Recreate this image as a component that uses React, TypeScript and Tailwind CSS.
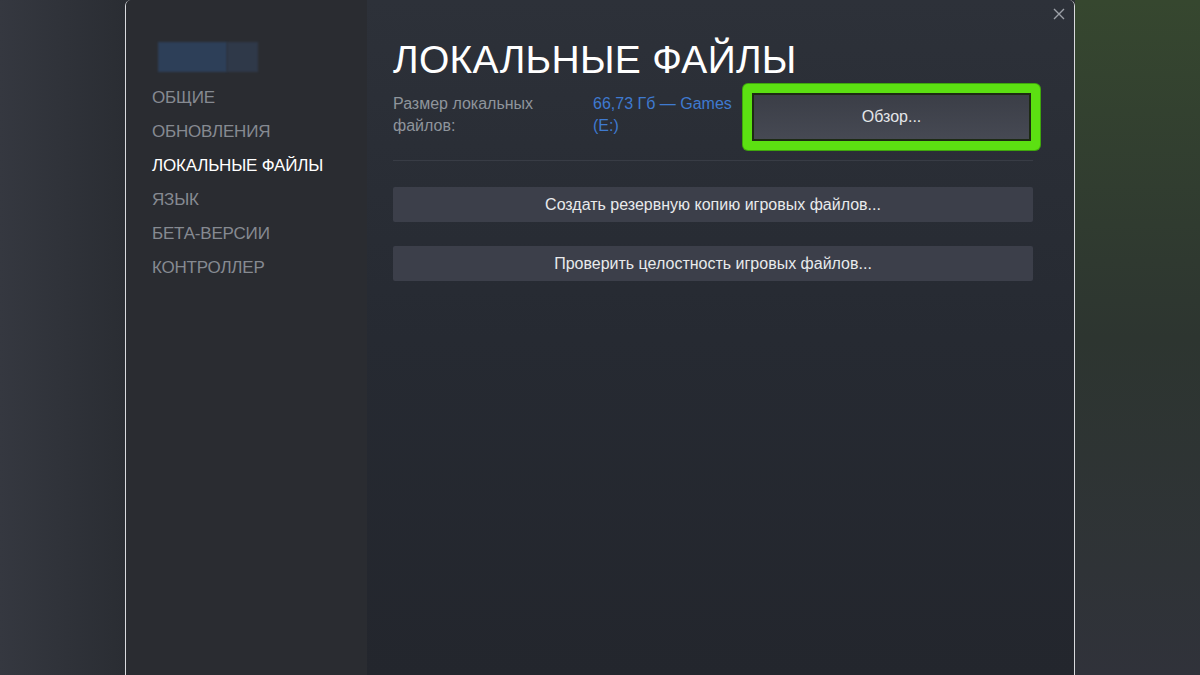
import React from "react";

const navItems = [
  "ОБЩИЕ",
  "ОБНОВЛЕНИЯ",
  "ЛОКАЛЬНЫЕ ФАЙЛЫ",
  "ЯЗЫК",
  "БЕТА-ВЕРСИИ",
  "КОНТРОЛЛЕР",
];

function CloseIcon() {
  return (
    <svg width="12" height="12" viewBox="0 0 12 12" fill="none">
      <path d="M1 1L11 11M11 1L1 11" stroke="#9ca0a7" strokeWidth="1.4" />
    </svg>
  );
}

export default function App() {
  return (
    <div
      className="flex h-[675px] w-[1200px] overflow-hidden bg-[#2c2f35]"
      style={{ fontFamily: '"Liberation Sans", Arial, sans-serif' }}
    >
      {/* left backdrop */}
      <div className="h-full w-[125px] bg-gradient-to-r from-[#353840] to-[#2a2d33]" />

      {/* dialog */}
      <div className="flex h-full w-[950px] overflow-hidden rounded-t-md border-x border-[#d9dade]">
        <aside className="flex w-[241px] flex-col bg-[#2a2c31] pl-[26px] pt-[42px]">
          <div className="ml-[6px] flex h-[30px] w-[100px]">
            <div className="h-full w-[69px] bg-[#2d3f58] blur-[1px]" />
            <div className="h-full w-[31px] bg-[#2f3949] blur-[1px]" />
          </div>
          <nav className="mt-[9px] flex flex-col text-[17px] tracking-[-0.2px]">
            {navItems.map((item) => (
              <div
                key={item}
                className={`flex h-[34px] items-center ${
                  item === "ЛОКАЛЬНЫЕ ФАЙЛЫ" ? "text-white" : "text-[#868a91]"
                }`}
              >
                {item}
              </div>
            ))}
          </nav>
        </aside>

        <main className="relative flex flex-1 flex-col bg-gradient-to-b from-[#2d3139] via-[#262a32] to-[#23262d] pl-[26px] pr-[41px] pt-[40px]">
          <button className="absolute right-[5px] top-[4px] p-1">
            <CloseIcon />
          </button>

          <h1 className="text-[39px] leading-[40px] tracking-[0.3px] text-white">
            ЛОКАЛЬНЫЕ ФАЙЛЫ
          </h1>

          <div className="mt-[3px] flex items-start">
            <div className="mt-[10px] w-[200px] text-[16px] leading-[22px] text-[#8f959c]">
              Размер локальных
              <br />
              файлов:
            </div>
            <div className="mt-[10px] w-[150px] text-[16px] leading-[22px] text-[#3f7ad0]">
              66,73 Гб — Games
              <br />
              (E:)
            </div>
            <div className="mr-[-10px] mt-[1px] rounded-[5px] bg-[#5ce012] p-[9px] shadow-[0_0_0_1px_#3fa70c]">
              <button className="flex h-[48px] w-[279px] items-center justify-center border-2 border-[#1d2a14] bg-gradient-to-b from-[#3b3e47] to-[#464953] text-[16px] text-[#e4e6e9]">
                Обзор...
              </button>
            </div>
          </div>

          <div className="mt-[10px] h-px w-full bg-[#383c45]" />

          <div className="mt-[26px] flex flex-col gap-[24px]">
            <button className="flex h-[35px] w-full items-center justify-center rounded-[2px] bg-[#3c3f4a] text-[16px] text-[#e8eaec]">
              Создать резервную копию игровых файлов...
            </button>
            <button className="flex h-[35px] w-full items-center justify-center rounded-[2px] bg-[#3c3f4a] text-[16px] text-[#e8eaec]">
              Проверить целостность игровых файлов...
            </button>
          </div>
        </main>
      </div>

      {/* right backdrop */}
      <div className="h-full flex-1 bg-gradient-to-b from-[#36472f] via-[#2d3530] to-[#30323a]" />
    </div>
  );
}
